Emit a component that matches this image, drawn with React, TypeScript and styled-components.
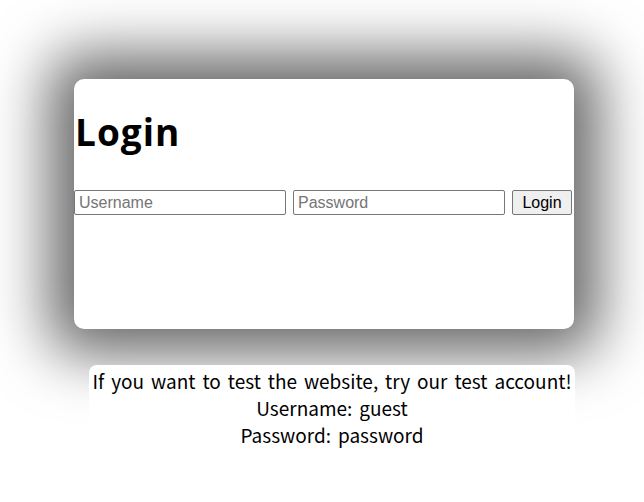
import React from "react";
import styled, { createGlobalStyle } from "styled-components";

const GlobalStyle = createGlobalStyle`
  html, body {
    margin: 0;
    padding: 0;
    background: #ffffff;
  }
  body {
    font-family: "Noto Sans CJK KR", "Noto Sans", sans-serif;
    color: #000;
  }
`;

const Page = styled.main`
  display: flex;
  flex-direction: column;
  align-items: center;
  padding: 79px 0 40px 4px;
  min-height: 502px;
  box-sizing: border-box;
`;

const Card = styled.section`
  width: 500px;
  height: 250px;
  background: #ffffff;
  border-radius: 10px;
  box-shadow: 0 0 60px 25px rgba(0, 0, 0, 0.6);
  overflow: hidden;
`;

const Title = styled.h1`
  margin: 28px 0 0 1px;
  font-family: "Open Sans", "Noto Sans CJK KR", sans-serif;
  font-size: 37px;
  font-weight: 700;
  line-height: 50px;
  letter-spacing: 1px;
`;

const Form = styled.form`
  display: flex;
  align-items: center;
  gap: 7px;
  margin-top: 33px;
`;

const Field = styled.input`
  width: 212px;
  height: 25px;
  box-sizing: border-box;
  margin: 0;
  padding: 1px 4px;
  border: 1px solid #767676;
  border-radius: 2px;
  font-family: "Liberation Sans", Arial, sans-serif;
  font-size: 16px;
  color: #000;
  background: #fff;
  &::placeholder {
    color: #757575;
  }
`;

const SubmitButton = styled.button`
  width: 60px;
  height: 25px;
  box-sizing: border-box;
  margin: 0;
  padding: 1px 6px;
  border: 1px solid #767676;
  border-radius: 2px;
  background: #efefef;
  font-family: "Liberation Sans", Arial, sans-serif;
  font-size: 16px;
  color: #000;
`;

const Info = styled.div`
  width: 486px;
  margin: 36px 0 0 16px;
  padding: 2px 0 4px;
  background: #ffffff;
  border-radius: 8px;
  text-align: center;
  font-family: "Noto Sans CJK KR", "Noto Sans", sans-serif;
  font-size: 19px;
  line-height: 27px;
  word-spacing: 2.7px;
`;

const InfoLine = styled.p`
  margin: 0;
`;

export default function App() {
  return (
    <>
      <GlobalStyle />
      <Page>
        <Card>
          <Title>Login</Title>
          <Form onSubmit={(e) => e.preventDefault()}>
            <Field type="text" placeholder="Username" />
            <Field type="password" placeholder="Password" />
            <SubmitButton type="submit">Login</SubmitButton>
          </Form>
        </Card>
        <Info>
          <InfoLine>If you want to test the website, try our test account!</InfoLine>
          <InfoLine>Username: guest</InfoLine>
          <InfoLine>Password: password</InfoLine>
        </Info>
      </Page>
    </>
  );
}
